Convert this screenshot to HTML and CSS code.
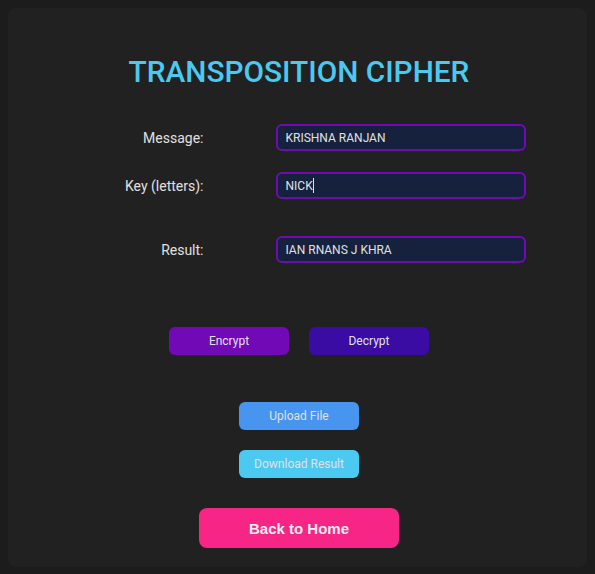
FILE: index.html
```html
<!DOCTYPE html>
<html lang="en">
<head>
<meta charset="utf-8">
<title>Transposition Cipher</title>
<link rel="stylesheet" href="styles.css">
</head>
<body>
<main class="card">
  <h1 class="title">TRANSPOSITION CIPHER</h1>
  <form class="form">
    <label class="label" for="message">Message:</label>
    <input class="field" id="message" type="text" value="KRISHNA RANJAN">
    <label class="label" for="key">Key (letters):</label>
    <div class="field-wrap">
      <input class="field" id="key" type="text" value="NICK">
      <span class="caret"></span>
    </div>
    <label class="label label-result" for="result">Result:</label>
    <input class="field field-result" id="result" type="text" value="IAN RNANS J KHRA" readonly>
  </form>
  <div class="actions">
    <button class="btn btn-encrypt" type="button">Encrypt</button>
    <button class="btn btn-decrypt" type="button">Decrypt</button>
  </div>
  <div class="file-actions">
    <button class="btn btn-upload" type="button">Upload File</button>
    <button class="btn btn-download" type="button">Download Result</button>
  </div>
  <div class="home">
    <button class="btn-home" type="button">Back to Home</button>
  </div>
</main>
</body>
</html>
```
FILE: styles.css
```css
html, body {
  background: #1c1c1c;
}
body {
  margin: 8px;
  font-family: Roboto, "Liberation Sans", sans-serif;
}
.card {
  background: #212121;
  border-radius: 8px;
  padding: 47px 0 19px 3px;
  display: flex;
  flex-direction: column;
  align-items: center;
}
.title {
  margin: 0;
  font-size: 29.8px;
  line-height: 34px;
  font-weight: 500;
  color: #4cc9f0;
  text-align: center;
}
.form {
  margin: 35px 2px 0 0;
  display: grid;
  grid-template-columns: 133px 250px;
  column-gap: 72px;
  row-gap: 21px;
  align-items: center;
}
.label {
  text-align: right;
  font-size: 14px;
  color: #e0e0e0;
}
.field-wrap {
  position: relative;
  display: flex;
}
.field {
  box-sizing: border-box;
  width: 250px;
  height: 27px;
  margin: 0;
  padding: 0 8px;
  border: 2px solid #7209b7;
  border-radius: 6px;
  background: #16213e;
  color: #e0e0e0;
  font-family: Roboto, "Liberation Sans", sans-serif;
  font-size: 12px;
  outline: none;
}
.label-result,
.field-result {
  margin-top: 16px;
}
.caret {
  position: absolute;
  left: 37px;
  top: 6px;
  width: 1px;
  height: 15px;
  background: #e0e0e0;
}
.actions {
  margin-top: 64px;
  display: flex;
  gap: 20px;
}
.file-actions {
  margin-top: 47px;
  display: flex;
  flex-direction: column;
  gap: 20px;
}
.btn {
  width: 120px;
  height: 28px;
  border: none;
  border-radius: 6px;
  color: #e0e0e0;
  font-family: Roboto, "Liberation Sans", sans-serif;
  font-size: 12px;
  padding: 0;
}
.btn-encrypt { background: #7209b7; }
.btn-decrypt { background: #3a0ca3; }
.btn-upload { background: #4895ef; }
.btn-download { background: #4cc9f0; }
.home {
  margin-top: 30px;
}
.btn-home {
  width: 200px;
  height: 40px;
  border: none;
  border-radius: 8px;
  background: #f72585;
  color: #eeeeee;
  font-family: "Liberation Sans", Arial, sans-serif;
  font-weight: bold;
  font-size: 15px;
  padding: 0;
}
```
